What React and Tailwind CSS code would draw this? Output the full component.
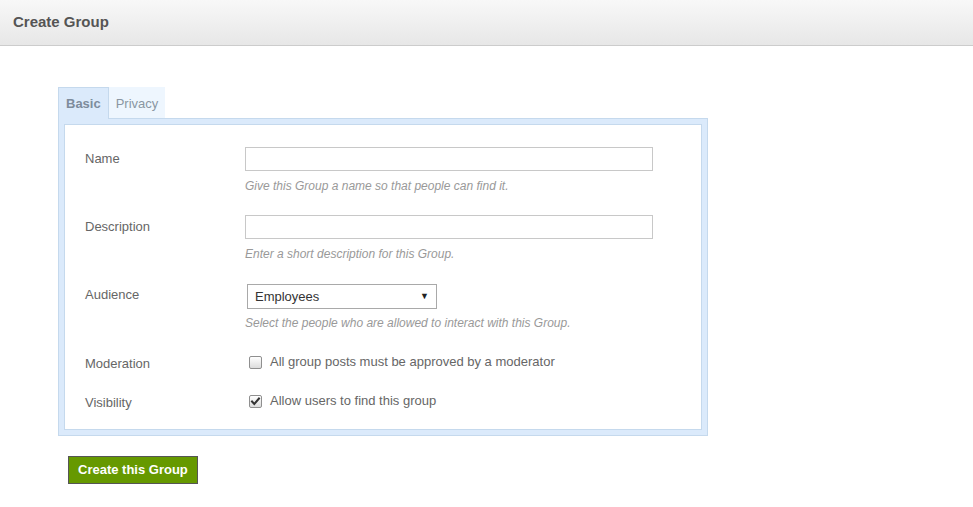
import React from 'react';

const font = { fontFamily: '"Liberation Sans", Arial, sans-serif' };

function Checkbox({ checked }) {
  return (
    <span className="relative inline-block w-[13px] h-[13px] rounded-[2px] border border-[#8f8f8f] bg-gradient-to-b from-[#ffffff] to-[#dcdcdc] shrink-0">
      {checked && (
        <svg viewBox="0 0 13 13" className="absolute left-[-1px] top-[-1px] w-[13px] h-[13px]">
          <path d="M3 6.5 L5.3 9 L10 3.5" fill="none" stroke="#333" strokeWidth="2" strokeLinecap="square" />
        </svg>
      )}
    </span>
  );
}

function Field({ label, children, className = '', labelClass = '' }) {
  return (
    <div className={`flex ${className}`}>
      <div className={`w-[160px] shrink-0 text-[13px] leading-[24px] text-[#666] ${labelClass}`}>{label}</div>
      <div className="flex-1">{children}</div>
    </div>
  );
}

export default function App() {
  return (
    <div className="min-h-screen bg-white" style={font}>
      <div className="h-[46px] bg-gradient-to-b from-[#f8f8f8] to-[#e7e7e7] border-b border-[#cccccc] flex items-center px-[13px]">
        <h1 className="text-[15px] font-bold text-[#555]">Create Group</h1>
      </div>

      <div className="pl-[58px] pt-[41px]">
        <div className="flex">
          <div className="h-[32px] pl-[7px] pr-[7px] pt-[1px] flex items-center bg-[#dbeafb] border-l border-t border-[#c5d9ed] text-[13px] font-bold text-[#7d8c9c]">
            Basic
          </div>
          <div className="h-[32px] px-[7px] pt-[2px] flex items-center bg-[#eef6fe] border-l border-b border-[#c5d9ed] text-[13px] text-[#8a96a2]">
            Privacy
          </div>
        </div>

        <div className="w-[650px] border border-[#c5d9ed] bg-[#dbeafb] p-[5px] -mt-px">
          <div className="border border-[#c5d9ed] bg-white pl-[20px] pt-[22px] pb-[14px]">
            <Field label="Name">
              <div className="w-[408px] h-[24px] border border-[#c8c8c8] bg-white" />
              <p className="mt-[8px] text-[12px] leading-[15px] italic text-[#999]">Give this Group a name so that people can find it.</p>
            </Field>

            <Field label="Description" className="mt-[21px]">
              <div className="w-[408px] h-[24px] border border-[#c8c8c8] bg-white" />
              <p className="mt-[8px] text-[12px] leading-[15px] italic text-[#999]">Enter a short description for this Group.</p>
            </Field>

            <Field label="Audience" className="mt-[22px]" labelClass="relative top-[-1px]">
              <div className="ml-[2px] w-[190px] h-[25px] border border-[#a9a9a9] bg-white flex items-center justify-between pl-[7px] pr-[7px] text-[13px] text-[#333]">
                <span>Employees</span>
                <span className="text-[9px] text-[#222]">▼</span>
              </div>
              <p className="mt-[7px] text-[12px] leading-[15px] italic text-[#999]">Select the people who are allowed to interact with this Group.</p>
            </Field>

            <Field label="Moderation" className="mt-[21px]">
              <div className="flex items-center gap-[8px] pl-[4px] h-[24px] text-[13px] text-[#666] relative top-[-2px]">
                <Checkbox checked={false} />
                <span>All group posts must be approved by a moderator</span>
              </div>
            </Field>

            <Field label="Visibility" className="mt-[15px]">
              <div className="flex items-center gap-[8px] pl-[4px] h-[24px] text-[13px] text-[#666] relative top-[-2px]">
                <Checkbox checked />
                <span>Allow users to find this group</span>
              </div>
            </Field>
          </div>
        </div>

        <button className="block mt-[20px] ml-[10px] h-[28px] px-[9px] bg-[#669900] border border-[#555] text-white text-[13px] font-bold">
          Create this Group
        </button>
      </div>
    </div>
  );
}
